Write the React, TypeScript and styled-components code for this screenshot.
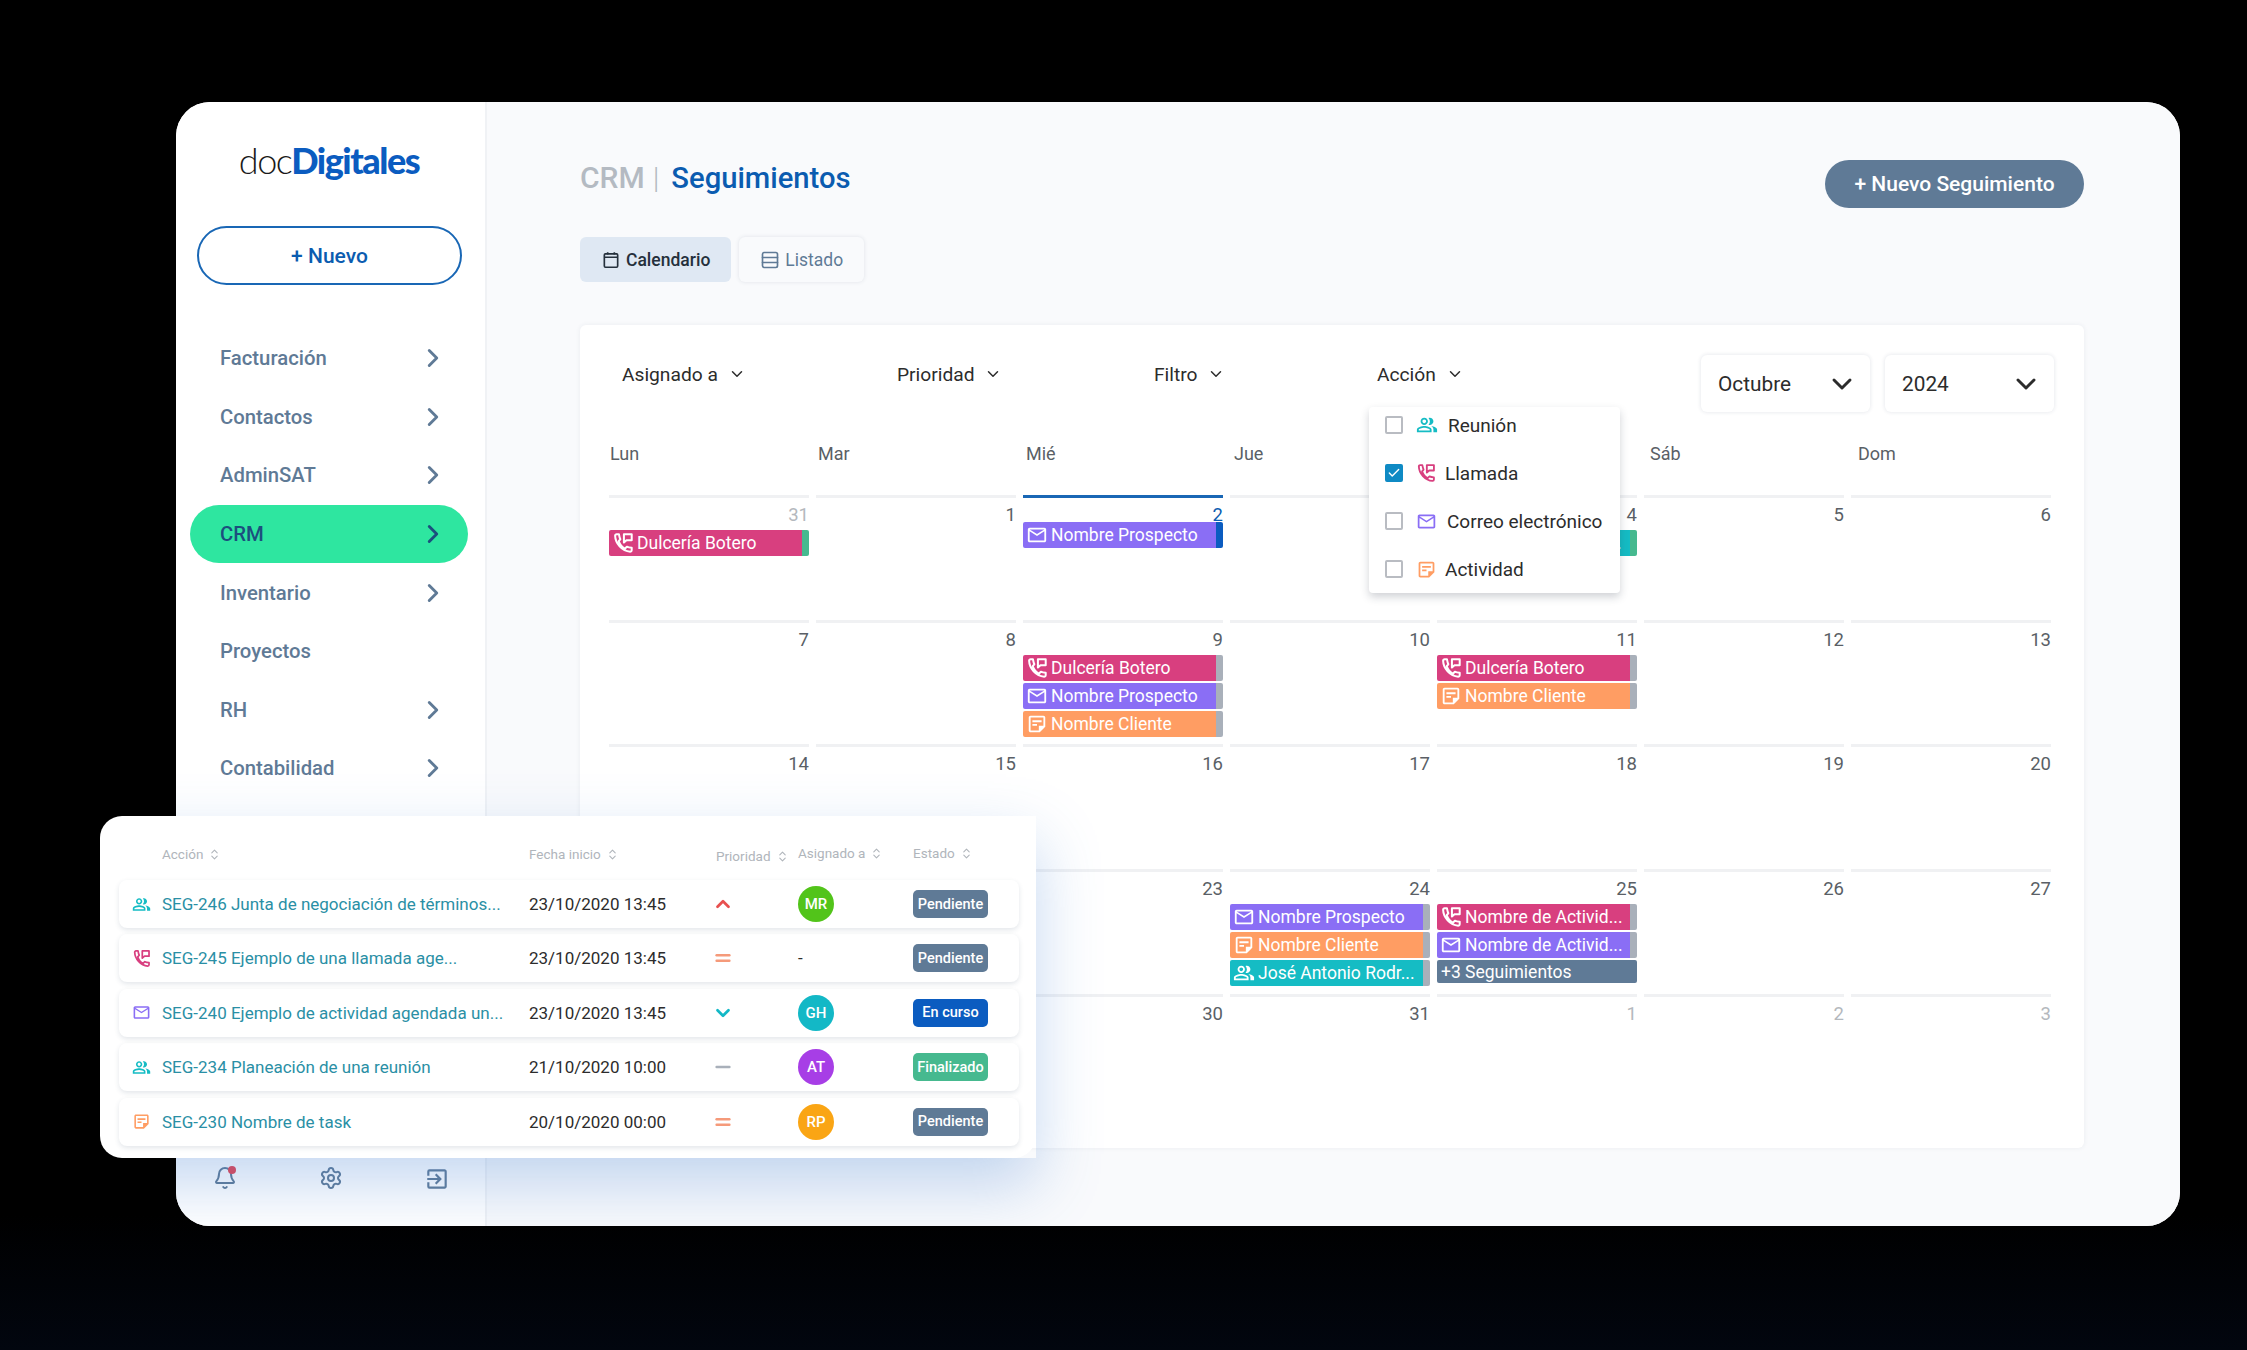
import React, { FC } from 'react';
import styled, { createGlobalStyle, css } from 'styled-components';
import { Bell, ChevronDown, ChevronRight, ChevronUp, ChevronsUpDown, Check, Equal, Minus, Rows3, Settings } from 'lucide-react';
import { MdOutlineEmail, MdOutlineExitToApp, MdOutlinePeopleAlt, MdOutlineStickyNote2 } from 'react-icons/md';

type Action = 'meeting' | 'call' | 'mail' | 'task';

const colors: Record<Action, string> = {
  meeting: '#15bcc4',
  call: '#d83f7f',
  mail: '#8a6ef5',
  task: '#ff9d63',
};

const GlobalStyle = createGlobalStyle`
  html, body {
    margin: 0;
    background: #000;
    font-family: Roboto, "Liberation Sans", sans-serif;
  }
`;

const Stage = styled.div`
  position: relative;
  width: 2247px;
  height: 1350px;
  padding: 102px 67px 0 176px;
  box-sizing: border-box;
  background: linear-gradient(#000 90%, #02060f);
  overflow: hidden;
`;

const Window = styled.div`
  position: relative;
  width: 2004px;
  height: 1124px;
  display: flex;
  border-radius: 34px;
  overflow: hidden;
  background: #fff;

  /* glow of the floating table, clipped to the window */
  &::after {
    content: '';
    position: absolute;
    left: -76px;
    top: 714px;
    width: 936px;
    height: 342px;
    box-shadow: 0 26px 60px rgba(70, 130, 210, 0.32);
    pointer-events: none;
  }
`;

const Sidebar = styled.aside`
  width: 311px;
  flex-shrink: 0;
  box-sizing: border-box;
  padding: 38px 17px 0 14px;
  display: flex;
  flex-direction: column;
  border-right: 2px solid #f0f2f5;
  background: #fff;
`;

const Logo = styled.div`
  height: 40px;
  display: flex;
  justify-content: center;
  align-items: center;
  font-family: Lato, sans-serif;
  font-size: 36px;
  letter-spacing: -1.5px;
  color: #1a1a1a;
  font-weight: 300;
`;

const LogoStrong = styled.span`
  color: #0b5cc0;
  font-weight: 900;
`;

const NewButton = styled.button`
  height: 59px;
  margin: 46px 6px 0 7px;
  border: 2px solid #1967b5;
  border-radius: 30px;
  background: #fff;
  color: #0b5cb0;
  font: 500 21px Roboto, sans-serif;
`;

const Nav = styled.nav`
  margin-top: 44px;
  display: flex;
  flex-direction: column;
`;

const NavItem = styled.div<{ $active?: boolean }>`
  height: 58.6px;
  flex-shrink: 0;
  display: flex;
  align-items: center;
  justify-content: space-between;
  padding: 0 20px 0 30px;
  border-radius: 30px;
  font-size: 20.300px;
  font-weight: 500;
  color: #5f7a96;
  ${(p) =>
    p.$active &&
    css`
      background: #2ee6a0;
      color: #1c4f7e;
    `}
`;

const SideFooter = styled.div`
  margin-top: auto;
  padding: 0 0 36px 23px;
  display: flex;
  gap: 81.5px;
  color: #5f7a96;
`;

const FooterIcon = styled.span`
  position: relative;
  width: 24px;
  height: 24px;
  display: block;
`;

const BellDot = styled.span`
  position: absolute;
  top: 0;
  right: 1px;
  width: 8px;
  height: 8px;
  border-radius: 50%;
  background: #e8424f;
`;

const Main = styled.main`
  flex: 1;
  padding: 58px 96px 0 93px;
  background: #f9fafc;
  min-width: 0;
`;

const Header = styled.header`
  display: flex;
  justify-content: space-between;
  align-items: flex-start;
`;

const Title = styled.h1`
  margin: 1px 0 0;
  font-size: 30px;
  line-height: 34px;
  font-weight: 500;
  color: #b4bac2;
`;

const TitleBar = styled.span`
  font-weight: 300;
  margin: 0 9px 0 8px;
`;

const TitleStrong = styled.span`
  margin-left: 3px;
  font-size: 29.200px;
  color: #0b5cb0;
`;

const PrimaryButton = styled.button`
  width: 259px;
  height: 48px;
  border: 0;
  border-radius: 24px;
  background: #5f7a96;
  color: #fff;
  font: 500 21px Roboto, sans-serif;
`;

const Tabs = styled.div`
  margin-top: 29px;
  display: flex;
  gap: 8px;
`;

const Tab = styled.div<{ $active?: boolean }>`
  height: 45px;
  padding: 0 21px;
  display: flex;
  align-items: center;
  gap: 5px;
  border-radius: 6px;
  font-size: 17.500px;
  font-weight: ${(p) => (p.$active ? 500 : 400)};
  color: ${(p) => (p.$active ? '#25303c' : '#5f7a96')};
  background: ${(p) => (p.$active ? '#dfe8f3' : '#f9fafc')};
  box-shadow: ${(p) => (p.$active ? 'none' : '0 0 4px rgba(40, 60, 90, 0.12)')};
`;

const Card = styled.section`
  position: relative;
  height: 823px;
  margin-top: 43px;
  box-sizing: border-box;
  padding: 30px 33px 0 29px;
  background: #fff;
  border-radius: 6px;
  box-shadow: 0 0 5px rgba(40, 60, 90, 0.07);
`;

const Filters = styled.div`
  display: flex;
  margin-left: 13px;
`;

const Filter = styled.div<{ $width: number }>`
  width: ${(p) => p.$width}px;
  flex-shrink: 0;
  height: 38px;
  display: flex;
  align-items: center;
  gap: 10px;
  font-size: 19.200px;
  color: #2c2c2c;
`;

const Select = styled.div`
  width: 169px;
  flex-shrink: 0;
  height: 57px;
  box-sizing: border-box;
  margin-right: 15px;
  padding: 0 12px 0 17px;
  display: flex;
  align-items: center;
  justify-content: space-between;
  border-radius: 6px;
  font-size: 20.800px;
  color: #2c2c2c;
  box-shadow: 0 0 4px rgba(40, 60, 90, 0.14);
`;

const Weekdays = styled.div`
  margin: 30px 0 29px 1px;
  display: grid;
  grid-template-columns: repeat(7, 208px);
  font-size: 18px;
  line-height: 24px;
  color: #5a5f66;
`;

const Weeks = styled.div`
  display: grid;
  grid-template-columns: repeat(7, 200px);
  grid-auto-rows: 124.7px;
  column-gap: 7px;
`;

const Cell = styled.div<{ $today?: boolean }>`
  box-sizing: border-box;
  padding-top: 6px;
  border-top: 3px solid ${(p) => (p.$today ? '#1967b5' : '#f0f1f3')};
`;

const DayNumber = styled.div<{ $muted?: boolean; $today?: boolean }>`
  height: 22px;
  line-height: 22px;
  text-align: right;
  font-size: 18.500px;
  color: ${(p) => (p.$today ? '#0b5cb0' : p.$muted ? '#b4b8bd' : '#5a5f66')};
`;

const EventList = styled.div<{ $tight?: boolean }>`
  margin-top: ${(p) => (p.$tight ? -4 : 4)}px;
  display: flex;
  flex-direction: column;
  gap: 2px;
`;

const EventBar = styled.div<{ $color: string; $bar: string }>`
  height: 26px;
  display: flex;
  align-items: center;
  gap: 3px;
  padding: 0 10px 0 3px;
  border-radius: 2px;
  overflow: hidden;
  color: #fff;
  font-size: 17.500px;
  background: linear-gradient(to left, ${(p) => p.$bar} 7px, ${(p) => p.$color} 7px);
`;

const EventText = styled.span`
  white-space: nowrap;
  overflow: hidden;
`;

const MoreBar = styled.div`
  height: 23px;
  line-height: 24px;
  padding-left: 4px;
  border-radius: 2px;
  color: #fff;
  font-size: 17.500px;
  background: #5f7a96;
`;

const Menu = styled.div`
  position: absolute;
  left: 789px;
  top: 82px;
  width: 251px;
  height: 186px;
  background: #fff;
  border-radius: 4px;
  box-shadow: 0 4px 8px rgba(40, 50, 70, 0.22);
`;

const MenuRow = styled.div`
  height: 48px;
  box-sizing: border-box;
  padding: 0 0 0 16px;
  display: flex;
  align-items: center;
  font-size: 19px;
  color: #2c2c2c;

  &:first-child {
    margin-top: -6px;
  }
`;

const Checkbox = styled.span<{ $checked?: boolean }>`
  width: 18px;
  height: 18px;
  box-sizing: border-box;
  margin-right: 13px;
  display: flex;
  align-items: center;
  justify-content: center;
  border-radius: 2px;
  color: #fff;
  border: 2px solid ${(p) => (p.$checked ? '#0f8ac4' : '#b9bcc2')};
  background: ${(p) => (p.$checked ? '#0f8ac4' : '#fff')};
`;

const MenuLabel = styled.span<{ $gap: number }>`
  margin-left: ${(p) => p.$gap}px;
`;

const FloatingTable = styled.div`
  position: absolute;
  left: 100px;
  top: 816px;
  width: 936px;
  height: 342px;
  box-sizing: border-box;
  padding: 28px 17px 0 19px;
  background: #fff;
  border-radius: 22px;
`;

const tableColumns = css`
  display: grid;
  grid-template-columns: 30px 367px 187px 82px 115px 1fr;
  align-items: center;
  padding-left: 13px;
`;

const TableHead = styled.div`
  ${tableColumns}
  height: 20px;
  margin-bottom: 16px;
  font-size: 13.500px;
  color: #b0b5bb;
`;

const HeadCell = styled.span<{ $shift?: number }>`
  display: flex;
  align-items: center;
  gap: 5px;
  position: relative;
  top: ${(p) => p.$shift ?? 0}px;
`;

const TableRow = styled.div`
  ${tableColumns}
  height: 48px;
  margin-bottom: 6.400px;
  border-radius: 8px;
  font-size: 17px;
  color: #2c2c2c;
  box-shadow: 0 2px 5px rgba(40, 60, 90, 0.13);
`;

const RowTitle = styled.span`
  color: #2a8fa5;
  font-size: 17px;
  white-space: nowrap;
`;

const Avatar = styled.span<{ $color: string }>`
  width: 36px;
  height: 36px;
  display: flex;
  align-items: center;
  justify-content: center;
  border-radius: 50%;
  color: #fff;
  font-size: 15px;
  font-weight: 500;
  background: ${(p) => p.$color};
`;

const Badge = styled.span<{ $color: string }>`
  width: 75px;
  height: 28px;
  display: flex;
  align-items: center;
  justify-content: center;
  border-radius: 5px;
  color: #fff;
  font-size: 14.500px;
  font-weight: 500;
  background: ${(p) => p.$color};
`;

const CallIcon: FC<{ size: number }> = ({ size }) => (
  <svg width={size} height={size} viewBox="0 0 24 24" fill="none" stroke="currentColor" strokeWidth="2.2" strokeLinejoin="round" strokeLinecap="round" style={{ flexShrink: 0 }}>
    <path d="M5 2.500h2.600c.5 3 1 4.400 1.500 5.400L7.300 10c1.400 4 3.200 6.600 6.700 8.200l2.200-2.200c1 .5 2.400 1 5.300 1.300v2.600c0 1-.7 1.600-1.600 1.600C10.700 20.600 3.700 12.500 3.400 4.100 3.400 3.200 4.100 2.500 5 2.500z" />
    <path d="M13 2.500h8.500v6.500H15.800L13 11.500z" />
  </svg>
);

const ActionIcon: FC<{ kind: Action; size: number }> = ({ kind, size }) => {
  if (kind === 'meeting') return <MdOutlinePeopleAlt size={size} style={{ flexShrink: 0 }} />;
  if (kind === 'mail') return <MdOutlineEmail size={size} style={{ flexShrink: 0 }} />;
  if (kind === 'task') return <MdOutlineStickyNote2 size={size} style={{ flexShrink: 0 }} />;
  return <CallIcon size={size} />;
};

const IconTint = styled.span<{ $kind: Action }>`
  display: flex;
  color: ${(p) => colors[p.$kind]};
`;

const CalendarIcon = () => (
  <svg width="20" height="20" viewBox="0 0 18 18" fill="none" stroke="#25303c" strokeWidth="1.5">
    <rect x="3" y="3.500" width="12" height="12" rx="1" />
    <path d="M3 6.500h12M6 2v2M12 2v2" />
  </svg>
);

const NAV = [
  { label: 'Facturación', arrow: true },
  { label: 'Contactos', arrow: true },
  { label: 'AdminSAT', arrow: true },
  { label: 'CRM', arrow: true, active: true },
  { label: 'Inventario', arrow: true },
  { label: 'Proyectos', arrow: false },
  { label: 'RH', arrow: true },
  { label: 'Contabilidad', arrow: true },
];

const GREY = '#a9b0ba';
const GREEN = '#46b98f';

type CalEvent = { kind: Action; text: string; bar: string };
type Day = { n: number; muted?: boolean; today?: boolean; events?: CalEvent[]; more?: string };

const prospect: CalEvent = { kind: 'mail', text: 'Nombre Prospecto', bar: GREY };
const client: CalEvent = { kind: 'task', text: 'Nombre Cliente', bar: GREY };
const sweets: CalEvent = { kind: 'call', text: 'Dulcería Botero', bar: GREY };

const range = (from: number, to: number): Day[] =>
  Array.from({ length: to - from + 1 }, (_, i) => ({ n: from + i }));

const DAYS: Day[] = [
  { n: 31, muted: true, events: [{ ...sweets, bar: GREEN }] },
  { n: 1 },
  { n: 2, today: true, events: [{ ...prospect, bar: '#0b5cc0' }] },
  { n: 3 },
  { n: 4, events: [{ kind: 'meeting', text: 'José Antonio Rodr...', bar: GREEN }] },
  { n: 5 },
  { n: 6 },
  { n: 7 },
  { n: 8 },
  { n: 9, events: [sweets, prospect, client] },
  { n: 10 },
  { n: 11, events: [sweets, client] },
  { n: 12 },
  { n: 13 },
  ...range(14, 23),
  { n: 24, events: [prospect, client, { kind: 'meeting', text: 'José Antonio Rodr...', bar: GREY }] },
  {
    n: 25,
    events: [
      { kind: 'call', text: 'Nombre de Activid...', bar: GREY },
      { kind: 'mail', text: 'Nombre de Activid...', bar: GREY },
    ],
    more: '+3 Seguimientos',
  },
  ...range(26, 31),
  { n: 1, muted: true },
  { n: 2, muted: true },
  { n: 3, muted: true },
];

const ROWS = [
  { kind: 'meeting' as Action, title: 'SEG-246 Junta de negociación de términos...', date: '23/10/2020 13:45', priority: 'high', who: 'MR', whoColor: '#52c41a', status: 'Pendiente', statusColor: '#5f7a96' },
  { kind: 'call' as Action, title: 'SEG-245 Ejemplo de una llamada age...', date: '23/10/2020 13:45', priority: 'mid', who: '', whoColor: '', status: 'Pendiente', statusColor: '#5f7a96' },
  { kind: 'mail' as Action, title: 'SEG-240 Ejemplo de actividad agendada un...', date: '23/10/2020 13:45', priority: 'low', who: 'GH', whoColor: '#13b8c6', status: 'En curso', statusColor: '#0b5cc0' },
  { kind: 'meeting' as Action, title: 'SEG-234 Planeación de una reunión', date: '21/10/2020 10:00', priority: 'none', who: 'AT', whoColor: '#a73ee6', status: 'Finalizado', statusColor: '#46b98f' },
  { kind: 'task' as Action, title: 'SEG-230 Nombre de task', date: '20/10/2020 00:00', priority: 'mid', who: 'RP', whoColor: '#faa514', status: 'Pendiente', statusColor: '#5f7a96' },
];

const PriorityIcon: FC<{ level: string }> = ({ level }) => {
  if (level === 'high') return <ChevronUp size={22} color="#e8504f" strokeWidth={3} style={{ marginLeft: -4 }} />;
  if (level === 'low') return <ChevronDown size={22} color="#13b8c6" strokeWidth={3} style={{ marginLeft: -4 }} />;
  if (level === 'mid') return <Equal size={22} color="#f59a7a" strokeWidth={2.6} style={{ marginLeft: -4 }} />;
  return <Minus size={22} color="#a9b0ba" strokeWidth={2.6} style={{ marginLeft: -4 }} />;
};

const SortHead: FC<{ label: string; shift?: number }> = ({ label, shift }) => (
  <HeadCell $shift={shift}>
    {label}
    <ChevronsUpDown size={13} />
  </HeadCell>
);

const App: FC = () => {
  return (
    <Stage>
      <GlobalStyle />
      <Window>
        <Sidebar>
          <Logo>
            doc<LogoStrong>Digitales</LogoStrong>
          </Logo>
          <NewButton>+ Nuevo</NewButton>
          <Nav>
            {NAV.map((item) => (
              <NavItem key={item.label} $active={item.active}>
                {item.label}
                {item.arrow && <ChevronRight size={30} strokeWidth={2.3} />}
              </NavItem>
            ))}
          </Nav>
          <SideFooter>
            <FooterIcon>
              <Bell size={24} />
              <BellDot />
            </FooterIcon>
            <FooterIcon>
              <Settings size={24} />
            </FooterIcon>
            <FooterIcon>
              <MdOutlineExitToApp size={26} />
            </FooterIcon>
          </SideFooter>
        </Sidebar>
        <Main>
          <Header>
            <Title>
              CRM
              <TitleBar>|</TitleBar>
              <TitleStrong>Seguimientos</TitleStrong>
            </Title>
            <PrimaryButton>+ Nuevo Seguimiento</PrimaryButton>
          </Header>
          <Tabs>
            <Tab $active>
              <CalendarIcon />
              Calendario
            </Tab>
            <Tab>
              <Rows3 size={20} />
              Listado
            </Tab>
          </Tabs>
          <Card>
            <Filters>
              <Filter $width={275}>
                Asignado a <ChevronDown size={18} />
              </Filter>
              <Filter $width={257}>
                Prioridad <ChevronDown size={18} />
              </Filter>
              <Filter $width={223}>
                Filtro <ChevronDown size={18} />
              </Filter>
              <Filter $width={324}>
                Acción <ChevronDown size={18} />
              </Filter>
              <Select>
                Octubre <ChevronDown size={32} strokeWidth={2.2} />
              </Select>
              <Select>
                2024 <ChevronDown size={32} strokeWidth={2.2} />
              </Select>
            </Filters>
            <Weekdays>
              {['Lun', 'Mar', 'Mié', 'Jue', 'Vie', 'Sáb', 'Dom'].map((d) => (
                <span key={d}>{d}</span>
              ))}
            </Weekdays>
            <Weeks>
              {DAYS.map((day, i) => (
                <Cell key={i} $today={day.today}>
                  <DayNumber $muted={day.muted} $today={day.today}>
                    {day.n}
                  </DayNumber>
                  {day.events && (
                    <EventList $tight={day.today}>
                      {day.events.map((ev, j) => (
                        <EventBar key={j} $color={colors[ev.kind]} $bar={ev.bar}>
                          <ActionIcon kind={ev.kind} size={22} />
                          <EventText>{ev.text}</EventText>
                        </EventBar>
                      ))}
                      {day.more && <MoreBar>{day.more}</MoreBar>}
                    </EventList>
                  )}
                </Cell>
              ))}
            </Weeks>
            <Menu>
              <MenuRow>
                <Checkbox />
                <IconTint $kind="meeting">
                  <ActionIcon kind="meeting" size={22} />
                </IconTint>
                <MenuLabel $gap={10}>Reunión</MenuLabel>
              </MenuRow>
              <MenuRow>
                <Checkbox $checked>
                  <Check size={14} strokeWidth={2.4} />
                </Checkbox>
                <IconTint $kind="call">
                  <ActionIcon kind="call" size={20} />
                </IconTint>
                <MenuLabel $gap={9}>Llamada</MenuLabel>
              </MenuRow>
              <MenuRow>
                <Checkbox />
                <IconTint $kind="mail">
                  <ActionIcon kind="mail" size={21} />
                </IconTint>
                <MenuLabel $gap={10}>Correo electrónico</MenuLabel>
              </MenuRow>
              <MenuRow>
                <Checkbox />
                <IconTint $kind="task">
                  <ActionIcon kind="task" size={21} />
                </IconTint>
                <MenuLabel $gap={8}>Actividad</MenuLabel>
              </MenuRow>
            </Menu>
          </Card>
        </Main>
      </Window>
      <FloatingTable>
        <TableHead>
          <span />
          <SortHead label="Acción" />
          <SortHead label="Fecha inicio" />
          <SortHead label="Prioridad" shift={2} />
          <SortHead label="Asignado a" shift={-1} />
          <SortHead label="Estado" shift={-1} />
        </TableHead>
        {ROWS.map((row) => (
          <TableRow key={row.title}>
            <IconTint $kind={row.kind}>
              <ActionIcon kind={row.kind} size={19} />
            </IconTint>
            <RowTitle>{row.title}</RowTitle>
            <span>{row.date}</span>
            <PriorityIcon level={row.priority} />
            {row.who ? <Avatar $color={row.whoColor}>{row.who}</Avatar> : <span>-</span>}
            <Badge $color={row.statusColor}>{row.status}</Badge>
          </TableRow>
        ))}
      </FloatingTable>
    </Stage>
  );
};

export default App;
